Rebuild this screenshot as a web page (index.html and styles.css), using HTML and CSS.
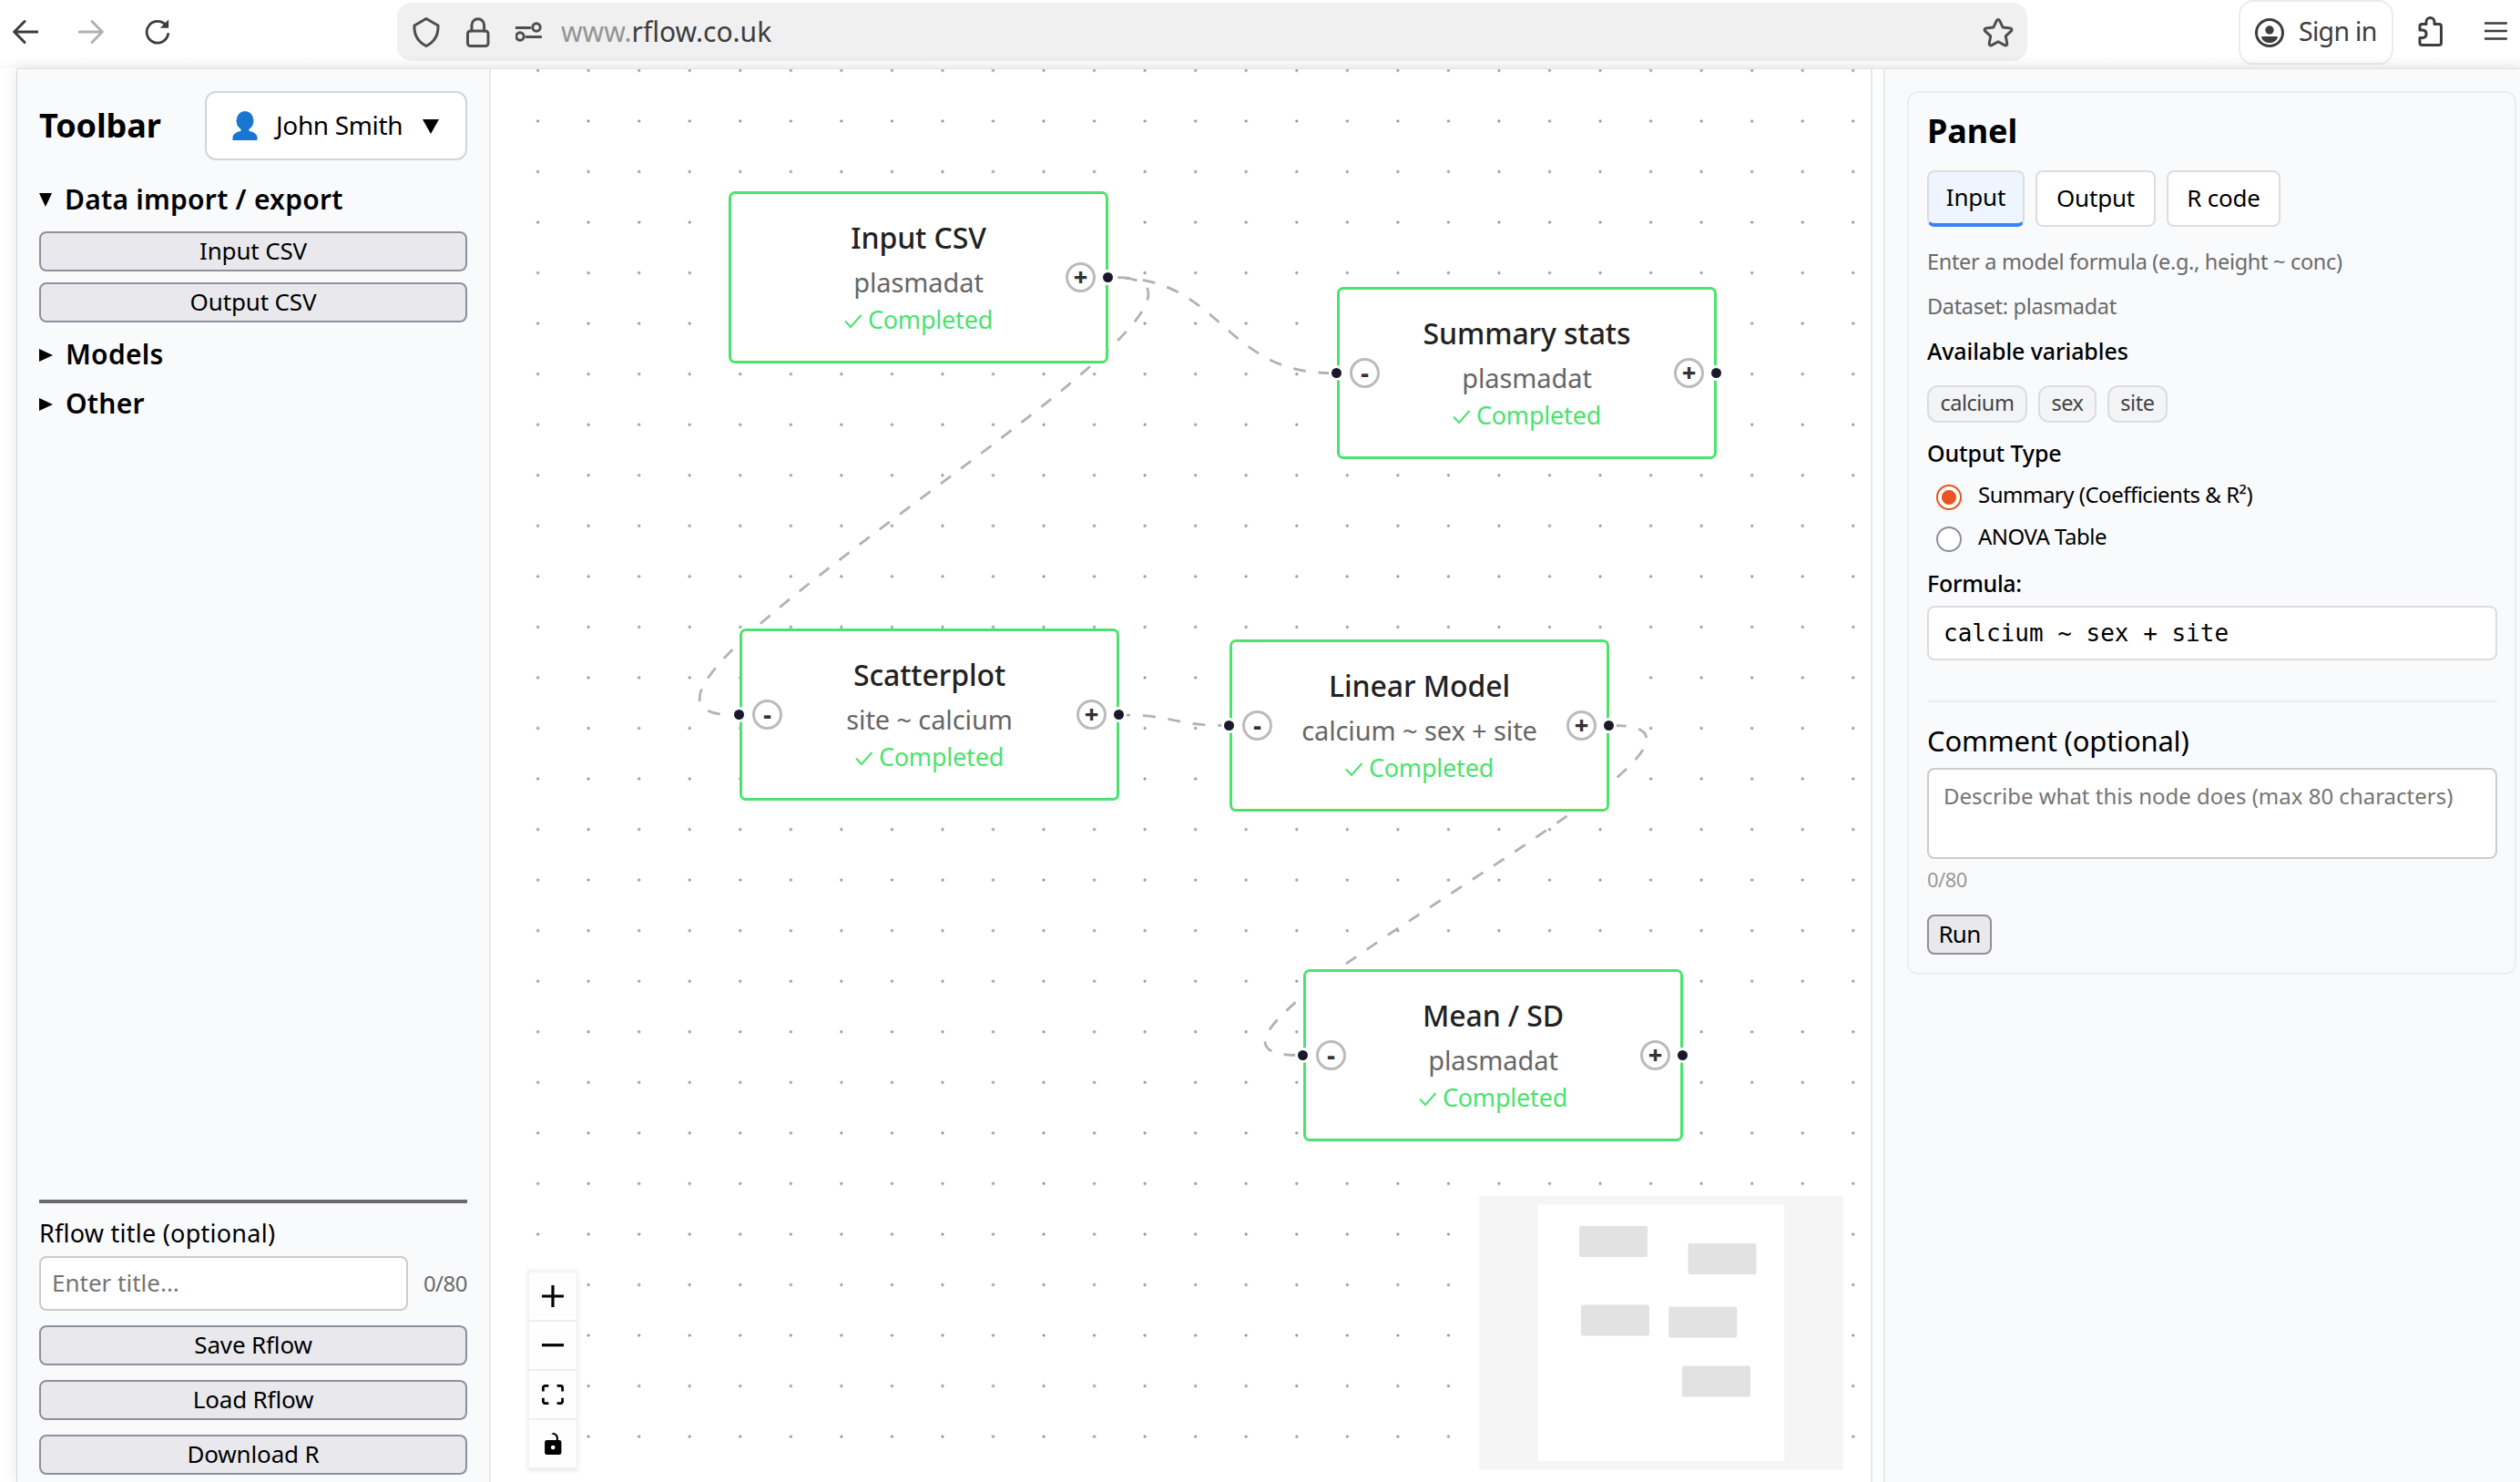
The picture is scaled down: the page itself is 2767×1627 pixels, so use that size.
FILE: index.html
```html
<!DOCTYPE html>
<html lang="en">
<head>
    <meta charset="UTF-8">
    <meta name="viewport" content="width=device-width, initial-scale=1.0">
    <title>Rflow</title>
    <link rel="stylesheet" href="styles.css">
</head>
<body>

<header class="browser">
    <div class="nav">
        <svg width="28" height="28" viewBox="0 0 28 28"><path d="M27 14H2M13 2.500L1.700 14 13 25.500"/></svg>
        <svg class="disabled" width="28" height="28" viewBox="0 0 28 28"><path d="M1 14h25M15 2.500L26.300 14 15 25.500"/></svg>
        <svg width="30" height="30" viewBox="0 0 30 30"><path d="M27.500 17.500A12.700 12.700 0 1 1 25 7.500"/><path class="solid" d="M28 0.500v10H18z"/></svg>
    </div>
    <div class="url-bar">
        <svg class="shield" width="30" height="33" viewBox="0 0 30 33"><path d="M15 1.500L28 9c.5 11-4 18-13 22.500C6 27 1.500 20 2 9z"/></svg>
        <svg class="lock" width="26" height="33" viewBox="0 0 26 33"><rect x="1.500" y="15" width="22.500" height="16.500" rx="3"/><path d="M6 15V8.500a6.800 6.800 0 0 1 13.600 0V15"/></svg>
        <svg class="perms" width="29" height="22" viewBox="0 0 29 22"><path d="M0 6.500h16M12 16.500h16"/><circle cx="23" cy="6" r="4.200"/><circle cx="5" cy="16" r="4.200"/></svg>
        <span class="url"><span class="www">www.</span>rflow.co.uk</span>
        <svg class="star" width="34" height="33" viewBox="0 0 34 33"><path d="M17 2.500c.8 0 1.400.5 1.800 1.300l3.300 7.200 8.200 1c1.700.3 2.200 2 1 3.200l-6 5.500 1.500 8c.3 1.700-1.200 2.700-2.700 1.900L17 26.700l-7.100 3.900c-1.500.8-3-.2-2.700-1.900l1.500-8-6-5.500c-1.200-1.200-.7-2.900 1-3.200l8.200-1 3.300-7.200c.4-.8 1-1.300 1.800-1.300z"/></svg>
    </div>
    <div class="account">
        <svg width="32" height="32" viewBox="0 0 32 32"><circle cx="16" cy="16" r="14.500"/><circle class="solid" cx="16" cy="13" r="4.700"/><path class="solid" d="M7 21q0-1 1.500-1h15q1.500 0 1.500 1c-1.500 4-5 6-9 6s-7.500-2-9-6z"/></svg>
        <span>Sign in</span>
    </div>
    <svg class="puzzle" width="28" height="33" viewBox="0 0 28 33"><path d="M2 12.500V11q0-2.500 2.500-2.500H9V6a4.500 4.500 0 0 1 9 0v2.500h5q2.500 0 2.500 2.500v18q0 2.500-2.500 2.500H4.500Q2 31.500 2 29v-5.500h3.500a4.300 4.300 0 0 0 0-8.500H2z"/></svg>
    <svg class="burger" width="25" height="20" viewBox="0 0 25 20"><path d="M0 1.500h24M0 10h24M0 18.500h24"/></svg>
</header>

<div class="app">
    <aside class="sidebar">
        <div class="sidebar-header">
            <h2>Toolbar</h2>
            <button class="user-btn">
                <svg width="28" height="32" viewBox="0 0 28 32"><ellipse cx="14" cy="10.500" rx="9.500" ry="10.500"/><path d="M9.500 18h9v4c5 .5 9 3.500 9 7v3H.5v-3c0-3.500 4-6.500 9-7z"/></svg>
                <span>John Smith</span>
                <i class="caret"></i>
            </button>
        </div>
        <details open>
            <summary>Data import / export</summary>
            <div class="tools">
                <button class="btn">Input CSV</button>
                <button class="btn">Output CSV</button>
            </div>
        </details>
        <details>
            <summary>Models</summary>
        </details>
        <details>
            <summary>Other</summary>
        </details>

        <div class="sidebar-footer">
            <label for="flowTitle">Rflow title (optional)</label>
            <div class="title-row">
                <input type="text" id="flowTitle" placeholder="Enter title...">
                <span>0/80</span>
            </div>
            <button class="btn">Save Rflow</button>
            <button class="btn">Load Rflow</button>
            <button class="btn">Download R</button>
        </div>
    </aside>

    <main class="canvas">
        <svg class="edges" viewBox="539 76 1515 1551">
            <path d="M1461.700 409.500C1342.200 409.500 1342.200 304.500 1222.800 304.500"/>
            <path class="shift-a" d="M806.400 785C579 785 1450 304.500 1222.800 304.500"/>
            <path class="shift-b" d="M1344 796.500C1289 796.500 1289 785 1234 785"/>
            <path d="M1771.600 796.500C1980 796.500 1217 1158.500 1425.400 1158.500"/>
        </svg>

        <div class="node node-csv">
            <div class="node-title">Input CSV</div>
            <div class="node-sub">plasmadat</div>
            <div class="node-status"><svg width="20" height="16" viewBox="0 0 20 16"><path d="M1 7.500l6 6.500L18.500 1"/></svg>Completed</div>
            <span class="port out"></span><span class="round out">+</span>
        </div>

        <div class="node node-stats">
            <div class="node-title">Summary stats</div>
            <div class="node-sub">plasmadat</div>
            <div class="node-status"><svg width="20" height="16" viewBox="0 0 20 16"><path d="M1 7.500l6 6.500L18.500 1"/></svg>Completed</div>
            <span class="port in"></span><span class="round in">-</span>
            <span class="port out"></span><span class="round out">+</span>
        </div>

        <div class="node node-scatter">
            <div class="node-title">Scatterplot</div>
            <div class="node-sub">site ~ calcium</div>
            <div class="node-status"><svg width="20" height="16" viewBox="0 0 20 16"><path d="M1 7.500l6 6.500L18.500 1"/></svg>Completed</div>
            <span class="port in"></span><span class="round in">-</span>
            <span class="port out"></span><span class="round out">+</span>
        </div>

        <div class="node node-linear">
            <div class="node-title">Linear Model</div>
            <div class="node-sub">calcium ~ sex + site</div>
            <div class="node-status"><svg width="20" height="16" viewBox="0 0 20 16"><path d="M1 7.500l6 6.500L18.500 1"/></svg>Completed</div>
            <span class="port in"></span><span class="round in">-</span>
            <span class="port out"></span><span class="round out">+</span>
        </div>

        <div class="node node-mean">
            <div class="node-title">Mean / SD</div>
            <div class="node-sub">plasmadat</div>
            <div class="node-status"><svg width="20" height="16" viewBox="0 0 20 16"><path d="M1 7.500l6 6.500L18.500 1"/></svg>Completed</div>
            <span class="port in"></span><span class="round in">-</span>
            <span class="port out"></span><span class="round out">+</span>
        </div>

        <div class="controls">
            <button><svg width="24" height="24" viewBox="0 0 32 32"><path d="M32 18.133H18.133V32h-4.266V18.133H0v-4.266h13.867V0h4.266v13.867H32z"/></svg></button>
            <button><svg width="24" height="4" viewBox="0 0 32 5"><path d="M0 0h32v4.200H0z"/></svg></button>
            <button><svg width="24" height="22.500" viewBox="0 0 32 30"><path d="M3.692 4.630c0-.53.4-.938.939-.938h5.215V0H4.708C2.130 0 0 2.054 0 4.630v5.216h3.692V4.631zM27.354 0h-5.200v3.692h5.170c.53 0 .984.4.984.939v5.215H32V4.631A4.624 4.624 0 0 0 27.354 0zm.954 24.830c0 .532-.4.940-.939.940h-5.215v3.768h5.215c2.577 0 4.631-2.130 4.631-4.707v-5.139h-3.692v5.139zm-23.677.940c-.531 0-.939-.4-.939-.940v-5.138H0v5.139c0 2.577 2.130 4.707 4.708 4.707h5.138V25.770H4.631z"/></svg></button>
            <button><svg width="19" height="24" viewBox="0 0 25 32"><path d="M21.333 10.667H19.810V7.619C19.810 3.429 16.380 0 12.190 0c-4.114 1.828-1.370 2.133.305 2.438 1.676.305 4.420 2.590 4.420 5.181v3.048H3.047A3.056 3.056 0 0 0 0 13.714v15.238A3.056 3.056 0 0 0 3.048 32h18.285a3.056 3.056 0 0 0 3.048-3.048V13.714a3.056 3.056 0 0 0-3.048-3.047zM12.190 24.533a3.056 3.056 0 0 1-3.047-3.047 3.056 3.056 0 0 1 3.047-3.048 3.056 3.056 0 0 1 3.048 3.048 3.056 3.056 0 0 1-3.048 3.047z"/></svg></button>
        </div>

        <svg class="minimap" width="400" height="300" viewBox="0 0 400 300">
            <rect class="view" x="65" y="9.500" width="270" height="281.500"/>
            <rect x="110" y="33" width="75" height="34" rx="2"/>
            <rect x="229.500" y="52" width="75" height="34" rx="2"/>
            <rect x="112" y="119.500" width="75" height="34" rx="2"/>
            <rect x="208.300" y="121.500" width="75" height="34" rx="2"/>
            <rect x="223" y="186.500" width="75" height="34" rx="2"/>
        </svg>
    </main>

    <aside class="panel">
        <div class="card">
            <h2>Panel</h2>
            <div class="tabs">
                <button class="tab tab-input active">Input</button>
                <button class="tab tab-output">Output</button>
                <button class="tab tab-code">R code</button>
            </div>
            <p class="hint">Enter a model formula (e.g., height ~ conc)</p>
            <p class="dataset">Dataset: plasmadat</p>
            <h4 class="vars-title">Available variables</h4>
            <div class="chips"><span>calcium</span><span>sex</span><span>site</span></div>
            <h4 class="type-title">Output Type</h4>
            <label class="radio"><i class="dot checked"></i>Summary (Coefficients &amp; R²)</label>
            <label class="radio"><i class="dot"></i>ANOVA Table</label>
            <h4 class="formula-title">Formula:</h4>
            <input class="formula" type="text" value="calcium ~ sex + site">
            <div class="comment">
                <label for="comment">Comment (optional)</label>
                <textarea id="comment" placeholder="Describe what this node does (max 80 characters)"></textarea>
                <div class="count">0/80</div>
            </div>
            <button class="btn run">Run</button>
        </div>
    </aside>
</div>

</body>
</html>
```

FILE: styles.css
```css
* {
    box-sizing: border-box;
}
body {
    margin: 0;
    height: 1627px;
    overflow: hidden;
    display: flex;
    flex-direction: column;
    font-family: 'Noto Sans', sans-serif;
    color: #000;
    background: #fff;
}
h2, h4, p {
    margin: 0;
}
button, input, textarea {
    font-family: inherit;
    color: inherit;
    margin: 0;
}
svg {
    flex: none;
}

/* browser chrome */
.browser {
    height: 75px;
    flex: none;
    display: flex;
    align-items: flex-start;
    color: #3d3d3d;
    background: linear-gradient(#fff 66px, #f9f9fa 75px);
}
.browser svg {
    fill: none;
    stroke: #3d3d3d;
    stroke-width: 3;
    stroke-linecap: round;
    stroke-linejoin: round;
}
.browser .solid {
    fill: #3d3d3d;
    stroke: none;
}
.nav {
    width: 436px;
    padding: 21px 0 0 14px;
    display: flex;
    gap: 44px;
}
.nav svg {
    height: 28px;
}
.browser .nav .disabled {
    stroke: #b1b1b1;
}
.url-bar {
    width: 1790px;
    height: 64px;
    margin-top: 3px;
    padding-left: 17px;
    display: flex;
    align-items: center;
    background: #f0f0f0;
    border-radius: 16px;
}
.browser .url-bar svg {
    stroke: #4e4e4e;
}
.lock {
    margin-left: 29px;
}
.perms {
    margin-left: 28px;
}
.url {
    margin-left: 21px;
    font-size: 30px;
    line-height: 40px;
}
.www {
    color: #949494;
}
.url-bar .star {
    margin: 1px 15px 0 auto;
}
.account {
    width: 170px;
    height: 71px;
    margin-left: 232px;
    padding-left: 16px;
    display: flex;
    align-items: center;
    gap: 16px;
    border: 2px solid #ebebeb;
    border-radius: 16px;
    font-size: 28.5px;
    letter-spacing: -0.7px;
    white-space: nowrap;
}
.account span {
    margin-top: -3px;
}
.puzzle {
    margin: 18px 0 0 27px;
}
.browser .burger {
    margin: 24px 0 0 45px;
    stroke-width: 2.5;
}

.app {
    flex: 1;
    min-height: 0;
    margin-left: 18px;
    display: flex;
    border-top: 1px solid #e2e3e6;
    box-shadow: 0 0 16px rgba(0, 0, 0, 0.1);
}

/* left toolbar */
.sidebar {
    width: 521px;
    flex: none;
    padding: 24px 24px 8px 24px;
    display: flex;
    flex-direction: column;
    background: #f9fafc;
    border-left: 1px solid #d5d7da;
    border-right: 2px solid #e5e7eb;
}
.sidebar-header {
    display: flex;
    align-items: center;
    justify-content: space-between;
    margin-bottom: 9px;
}
h2 {
    font-size: 36px;
    line-height: 44px;
    letter-spacing: -0.1px;
}
.user-btn {
    width: 288px;
    height: 76px;
    padding: 0 0 0 28px;
    display: flex;
    align-items: center;
    background: #fff;
    border: 2px solid #d1d5db;
    border-radius: 12px;
    font-size: 28px;
    letter-spacing: -0.35px;
}
.user-btn svg {
    fill: #1976d2;
}
.user-btn span {
    margin-top: -2px;
    margin-left: 20px;
}
.caret {
    margin-top: 1px;
    margin-left: 22px;
    border: 9px solid transparent;
    border-top: 16px solid #000;
    border-bottom: 0;
}
summary {
    margin-top: 14px;
    display: flex;
    align-items: center;
    gap: 14px;
    font-size: 30px;
    font-weight: 600;
    line-height: 40px;
    letter-spacing: 0.25px;
}
summary::before {
    content: "";
    margin-top: 1px;
    border: 7.5px solid transparent;
    border-left: 15px solid #000;
    border-right: 0;
}
details[open] summary::before {
    border: 7.5px solid transparent;
    border-top: 15px solid #000;
    border-bottom: 0;
}
.tools {
    margin-top: 15px;
    margin-bottom: 1px;
    display: flex;
    flex-direction: column;
    gap: 12px;
}
.btn {
    width: 100%;
    height: 44px;
    padding: 0 0 2px;
    background: #e9e9ed;
    border: 2px solid #8f8f9d;
    border-radius: 8px;
    font-size: 26px;
    line-height: 36px;
    letter-spacing: -0.15px;
}
.sidebar-footer {
    margin-top: auto;
    padding-top: 15px;
    display: flex;
    flex-direction: column;
    gap: 16px;
    border-top: 4px solid #6b6b6d;
}
.sidebar-footer label {
    font-size: 27px;
    line-height: 36px;
    letter-spacing: 0.25px;
    margin-bottom: -9px;
}
.title-row {
    display: flex;
    align-items: center;
    justify-content: space-between;
    color: #6a6a6a;
    font-size: 24px;
    letter-spacing: -0.5px;
}
.title-row span {
    margin-top: -2px;
}
.title-row input {
    width: 405px;
    height: 60px;
    padding: 0 12px 2px;
    background: #fff;
    border: 2px solid #ccc;
    border-radius: 8px;
    font-size: 26px;
}
::placeholder {
    color: #757575;
}

/* flow canvas */
.canvas {
    flex: 1;
    position: relative;
    background: radial-gradient(circle at center, #91919a 1px, transparent 2px) 23.800px -26.400px / 55.560px 55.560px #fff;
    border-right: 2px solid #e5e7eb;
}
.edges {
    position: absolute;
    left: 0;
    top: 0;
    width: 1515px;
    height: 1551px;
}
.edges path {
    fill: none;
    stroke: #b1b1b7;
    stroke-width: 2.800;
    stroke-dasharray: 13.900;
}
.edges .shift-a {
    stroke-dashoffset: 12;
}
.edges .shift-b {
    stroke-dashoffset: 7.300;
}
.node {
    position: absolute;
    width: 417px;
    height: 189px;
    padding-top: 28px;
    background: #fff;
    border: 3px solid #4be36e;
    border-radius: 7px;
    text-align: center;
    white-space: nowrap;
}
.node-csv { left: 261px; top: 134px; }
.node-stats { left: 929px; top: 239px; }
.node-scatter { left: 273px; top: 614px; }
.node-linear { left: 811px; top: 626px; }
.node-mean { left: 892px; top: 988px; }
.node-title {
    font-size: 32px;
    font-weight: 500;
    line-height: 39px;
    letter-spacing: -0.1px;
    color: #222;
}
.node-sub {
    margin-top: 10px;
    font-size: 29px;
    line-height: 40px;
    letter-spacing: -0.1px;
    color: #666;
}
.node-status {
    margin-top: 3px;
    display: flex;
    align-items: center;
    justify-content: center;
    gap: 6px;
    font-size: 27px;
    line-height: 36px;
    letter-spacing: -0.2px;
    color: #4be36e;
}
.node-status svg {
    margin-top: 3px;
    fill: none;
    stroke: #4be36e;
    stroke-width: 2;
}
.port {
    position: absolute;
    top: 83px;
    width: 17px;
    height: 17px;
    background: #1a192b;
    border: 3px solid #fff;
    border-radius: 50%;
}
.port.in { left: -12px; }
.port.out { right: -11px; }
.round {
    position: absolute;
    top: 75px;
    width: 33px;
    height: 33px;
    border: 3px solid #bbb;
    border-radius: 50%;
    background: #fff;
    color: #333;
    font-size: 27px;
    font-weight: 800;
    line-height: 26px;
}
.round.in { left: 11px; }
.round.out { right: 11px; }

.controls {
    position: absolute;
    left: 42px;
    bottom: 14px;
    width: 52px;
    display: flex;
    flex-direction: column;
    box-shadow: 0 0 5px 2px rgba(0, 0, 0, 0.08);
}
.controls button {
    height: 54px;
    padding: 0;
    display: flex;
    align-items: center;
    justify-content: center;
    background: #fefefe;
    border: 0;
    border-bottom: 2px solid #eee;
}
.minimap {
    position: absolute;
    right: 30px;
    bottom: 14px;
    background: #f5f5f5;
    fill: #e2e2e2;
}
.minimap .view {
    fill: #fff;
}

/* right panel */
.panel {
    width: 699px;
    flex: none;
    margin-left: 12px;
    padding: 24px 4px 0 24px;
    background: #f9fafc;
    border-left: 2px solid #e5e7eb;
}
.card {
    height: 970px;
    padding: 20px 19px 0 20px;
    border: 2px solid #ebedf0;
    border-radius: 12px;
}
.tabs {
    margin-top: 21px;
    display: flex;
    gap: 12px;
}
.tab {
    height: 62px;
    padding: 0 0 2px;
    background: #fff;
    border: 2px solid #ddd;
    border-radius: 8px;
    font-size: 26px;
    letter-spacing: -0.2px;
}
.tab-input { width: 107px; }
.tab-output { width: 132px; }
.tab-code { width: 125px; }
.tab.active {
    background: #eff5ff;
    border-bottom: 4px solid #3b82f6;
}
.hint, .dataset {
    font-size: 23.500px;
    line-height: 32px;
    letter-spacing: -0.32px;
    color: #6a6a6a;
}
.hint {
    margin-top: 22px;
}
.dataset {
    margin-top: 17px;
}
h4 {
    font-size: 25px;
    font-weight: 500;
    line-height: 32px;
    letter-spacing: -0.1px;
}
.vars-title {
    margin-top: 17px;
}
.chips {
    margin-top: 22px;
    display: flex;
    gap: 12px;
}
.chips span {
    height: 41px;
    padding: 0 12.500px;
    background: #f3f4f6;
    border: 2px solid #ddd;
    border-radius: 12px;
    font-size: 23.500px;
    line-height: 35px;
    letter-spacing: -0.5px;
    color: #444;
}
.type-title {
    margin-top: 17px;
}
.radio {
    margin-top: 14px;
    padding-left: 10px;
    display: flex;
    align-items: center;
    gap: 18px;
    font-size: 24px;
    line-height: 32px;
    letter-spacing: -0.500px;
}
.dot {
    width: 28px;
    height: 28px;
    margin-top: 5px;
    margin-bottom: -1px;
    background: #fff;
    border: 2px solid #8f8f9d;
    border-radius: 50%;
}
.dot.checked {
    border-color: #e95420;
    background: radial-gradient(circle, #e95420 7.500px, #fff 8.500px);
}
.formula-title {
    margin-top: 19px;
    letter-spacing: -0.3px;
}
.formula {
    display: block;
    width: 626px;
    height: 60px;
    margin-top: 9px;
    padding: 0 16px;
    background: #fff;
    border: 2px solid #ddd;
    border-radius: 8px;
    font: 26px 'DejaVu Sans Mono', monospace;
}
.comment {
    width: 626px;
    margin-top: 44px;
    padding-top: 22px;
    border-top: 2px solid #ebedf0;
}
.comment label {
    display: block;
    font-size: 31px;
    line-height: 40px;
    letter-spacing: -0.200px;
}
.comment textarea {
    display: block;
    width: 100%;
    height: 100px;
    margin-top: 10px;
    padding: 12px 16px;
    background: #fff;
    border: 2px solid #ccc;
    border-radius: 8px;
    font-size: 24px;
    line-height: 33px;
    resize: none;
}
.count {
    margin-top: 7px;
    font-size: 22px;
    line-height: 30px;
    letter-spacing: -0.5px;
    color: #999;
}
.run {
    display: block;
    width: 71px;
    margin-top: 24px;
    letter-spacing: -0.7px;
}
```
